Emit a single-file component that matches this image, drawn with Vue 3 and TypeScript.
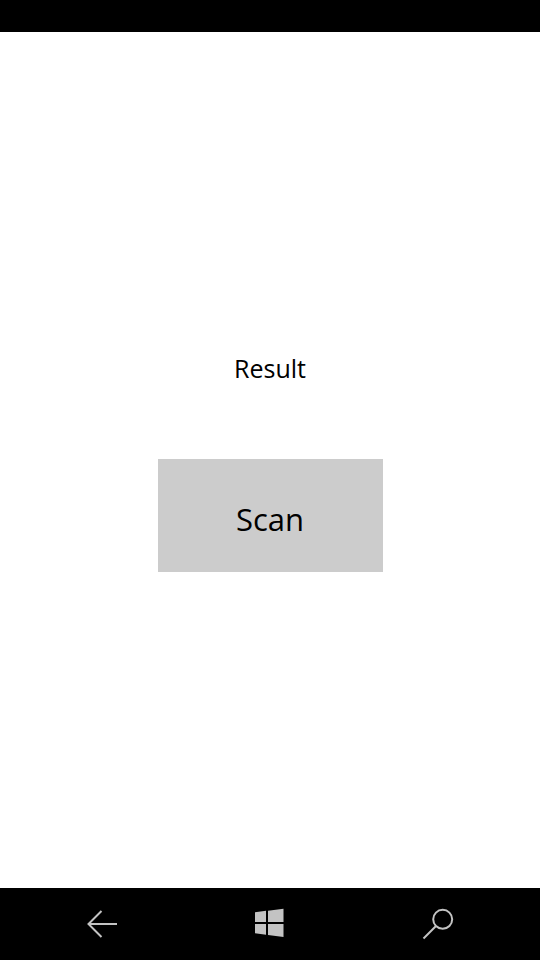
<script setup lang="ts">
import { ref } from 'vue'

const result = ref<string>('Result')
</script>

<template>
  <div class="screen">
    <header class="status-bar"></header>
    <main class="content">
      <p class="result">{{ result }}</p>
      <button class="scan" type="button">Scan</button>
    </main>
    <nav class="nav-bar">
      <button class="nav-button" type="button" aria-label="Back">
        <svg width="50" height="50" viewBox="0 0 50 50" fill="none" stroke="#c3c3c3" stroke-width="2">
          <path d="M40 25H11.500M24.500 12L11.500 25L24.500 38" />
        </svg>
      </button>
      <button class="nav-button" type="button" aria-label="Start">
        <svg width="50" height="50" viewBox="0 0 50 50" fill="#c3c3c3">
          <path d="M10 13.200L21 11.800V23H10zM23 11.700L38.500 9.700V23H23zM10 25H21V35.800L10 34.300zM23 25H38.500V38L23 36z" />
        </svg>
      </button>
      <button class="nav-button" type="button" aria-label="Search">
        <svg width="50" height="50" viewBox="0 0 50 50" fill="none" stroke="#c3c3c3" stroke-width="2">
          <circle cx="29.700" cy="20.300" r="9.500" />
          <path d="M23 27L10.500 39.500" />
        </svg>
      </button>
    </nav>
  </div>
</template>

<style>
body {
  margin: 0;
}
</style>

<style scoped>
.screen {
  display: flex;
  flex-direction: column;
  min-height: 100vh;
  background: #fff;
  color: #000;
  font-family: "Open Sans", "Noto Sans", sans-serif;
}

.status-bar {
  height: 32px;
  background: #000;
}

.content {
  flex: 1;
  display: flex;
  flex-direction: column;
  align-items: center;
  justify-content: center;
  gap: 74px;
  padding-top: 2px;
}

.result {
  margin: 0;
  font-size: 25px;
  line-height: 34px;
}

.scan {
  min-width: 225px;
  padding: 36px 24px 29px;
  border: 0;
  background: #ccc;
  color: #000;
  font-family: inherit;
  font-size: 31px;
  line-height: 48px;
}

.nav-bar {
  display: grid;
  grid-template-columns: repeat(3, 1fr);
  padding: 0 18px;
  background: #000;
}

.nav-button {
  display: flex;
  align-items: center;
  justify-content: center;
  height: 72px;
  padding: 0;
  border: 0;
  background: none;
}
</style>
